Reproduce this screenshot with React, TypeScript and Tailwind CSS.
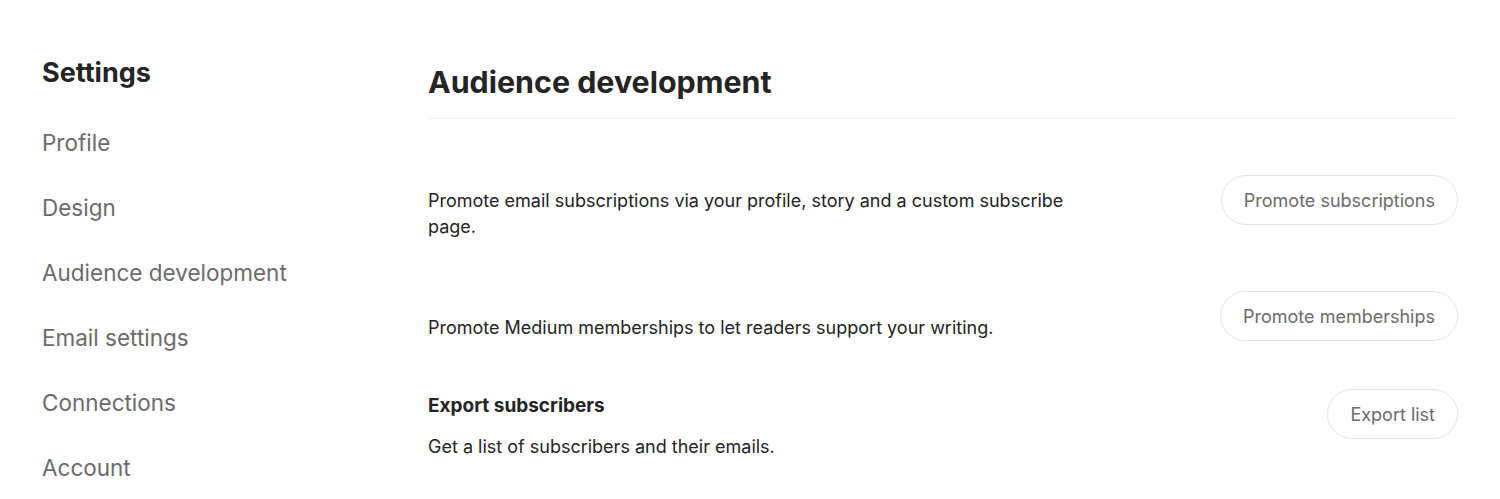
import React from "react";

const nav = ["Profile", "Design", "Audience development", "Email settings", "Connections", "Account"];

const font = { fontFamily: "Inter, 'Noto Sans', sans-serif" };

function PillButton({ label }: { label: string }) {
   return (
      <button
         type="button"
         className="h-[50px] shrink-0 rounded-full border border-[#e6e6e6] bg-white px-[22px] text-[18px] text-[#6b6b6b]"
      >
         {label}
      </button>
   );
}

export default function App() {
   return (
      <div className="flex min-h-[499px] bg-white px-[42px] text-[#242424]" style={font}>
         {/* Sidebar */}
         <aside className="w-[386px] shrink-0 pt-[57px]">
            <h2 className="text-[27px] leading-[32px] font-bold">Settings</h2>
            <nav className="mt-[38px] flex flex-col gap-[33px]">
               {nav.map((item) => (
                  <span key={item} className="text-[22.5px] leading-[32px] text-[#6b6b6b]">
                     {item}
                  </span>
               ))}
            </nav>
         </aside>

         {/* Main */}
         <main className="flex-1 pt-[64px]">
            <h1 className="text-[30.4px] leading-[36px] font-bold">Audience development</h1>
            <div className="mt-[18px] h-px bg-[#f2f2f2]" />

            <div className="mt-[56px] flex items-start justify-between">
               <p className="max-w-[650px] pt-[13px] text-[18px] leading-[26px]">
                  Promote email subscriptions via your profile, story and a custom subscribe page.
               </p>
               <PillButton label="Promote subscriptions" />
            </div>

            <div className="mt-[51px] flex items-start justify-between">
               <p className="pt-[24px] text-[18px] leading-[26px]">
                  Promote Medium memberships to let readers support your writing.
               </p>
               <PillButton label="Promote memberships" />
            </div>

            <div className="mt-[48px] flex items-start justify-between">
               <div className="pt-[5px]">
                  <h3 className="text-[19px] leading-[24px] font-bold">Export subscribers</h3>
                  <p className="mt-[16px] text-[18px] leading-[26px]">Get a list of subscribers and their emails.</p>
               </div>
               <PillButton label="Export list" />
            </div>
         </main>
      </div>
   );
}
